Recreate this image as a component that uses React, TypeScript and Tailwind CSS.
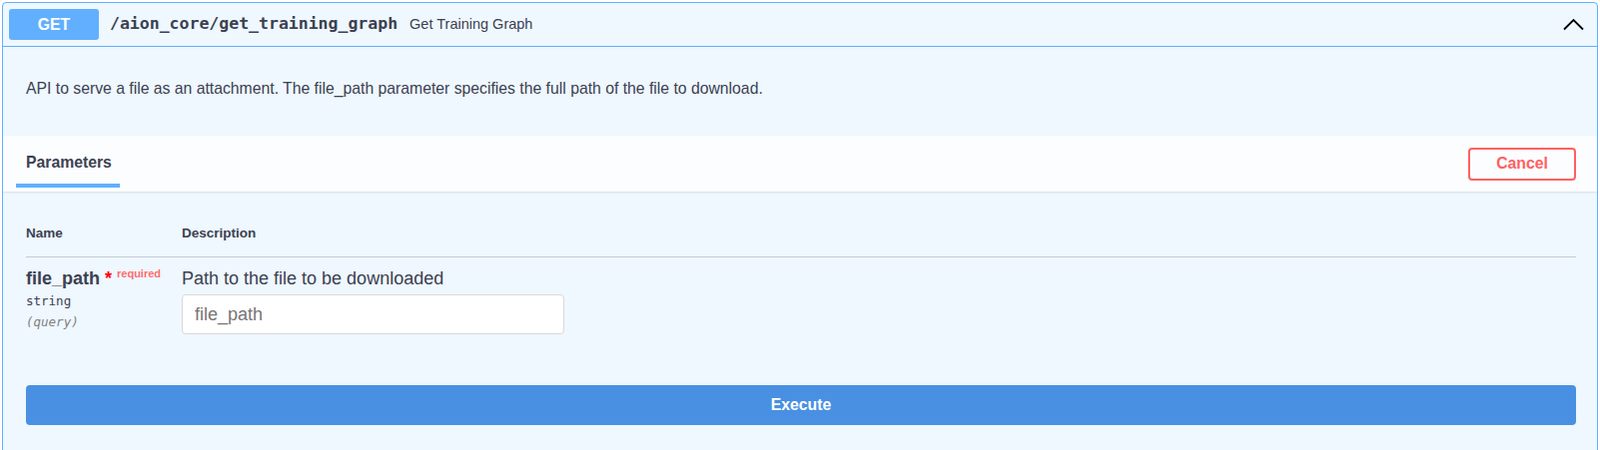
export default function App() {
  return (
    <div className="min-h-[451px] bg-white pl-[2px] pr-[2px] pt-[2px] font-['Liberation_Sans',Arial,sans-serif] text-[#3b4151]">
      <div className="overflow-hidden rounded-[4px] border border-[#61affe] bg-[#eff7ff]">
        {/* summary bar */}
        <div className="flex h-[44px] items-center border-b border-[#61affe] pl-[6px] pr-[13px]">
          <div className="flex h-[31px] w-[90px] items-center justify-center rounded-[3px] bg-[#61affe] text-[15.75px] font-bold text-white">
            GET
          </div>
          <span className="ml-[11px] font-['DejaVu_Sans_Mono',monospace] text-[16.5px] font-bold">
            /aion_core/get_training_graph
          </span>
          <span className="ml-[12px] text-[14.5px]">Get Training Graph</span>
          <svg className="ml-auto" width="21" height="13" viewBox="0 0 21 13" fill="none">
            <path d="M1 11.5 L10.5 2 L20 11.5" stroke="#000" strokeWidth="1.8" />
          </svg>
        </div>

        {/* description */}
        <div className="h-[89px] pl-[23px] pt-[32px] text-[15.75px] leading-[20px]">
          API to serve a file as an attachment. The file_path parameter specifies the full path of the file to download.
        </div>

        {/* parameters header */}
        <div className="flex h-[56px] items-center justify-between bg-white/80 shadow-[0_1px_2px_rgba(0,0,0,0.1)]">
          <div className="ml-[13px] flex h-full w-[104px] flex-col">
            <div className="pl-[10px] pt-[17px] text-[15.75px] font-bold leading-[20px]">Parameters</div>
            <div className="mt-[11px] h-[4px] w-full bg-[#61affe]" />
          </div>
          <button className="mr-[21px] h-[33px] w-[108px] rounded-[4px] border-2 border-[#ff6060] bg-transparent text-[15.75px] font-bold text-[#ff6060]">
            Cancel
          </button>
        </div>

        {/* parameters table */}
        <div className="pb-[30px] pl-[23px] pr-[21px]">
          <div className="flex border-b border-[#c5cbd4] pb-[15px] pt-[34px] text-[13.5px] font-bold leading-[16px]">
            <div className="w-[156px]">Name</div>
            <div>Description</div>
          </div>
          <div className="flex pt-[10px]">
            <div className="w-[156px]">
              <div className="flex items-start text-[18px] leading-[22px]">
                <span className="font-bold">file_path</span>
                <span className="ml-[5px] font-bold text-[#ff0000]">*</span>
                <span className="relative -top-[5px] ml-[5px] text-[11px] font-bold text-[#ff6b6b]">required</span>
              </div>
              <div className="mt-[4px] font-['DejaVu_Sans_Mono',monospace] text-[12.5px] leading-[16px]">string</div>
              <div className="mt-[5px] font-['DejaVu_Sans_Mono',monospace] text-[12.5px] italic leading-[16px] text-[#808080]">
                (query)
              </div>
            </div>
            <div>
              <div className="text-[18px] leading-[22px]">Path to the file to be downloaded</div>
              <input
                placeholder="file_path"
                className="mt-[5px] h-[40px] w-[383px] rounded-[4px] border border-[#d9d9d9] bg-white pl-[12px] text-[18px] text-[#3b4151] outline-none placeholder:text-[#757575]"
              />
            </div>
          </div>
          <button className="mt-[51px] h-[40px] w-full rounded-[4px] bg-[#4990e2] text-[15.75px] font-bold text-white">
            Execute
          </button>
        </div>
      </div>
    </div>
  );
}
